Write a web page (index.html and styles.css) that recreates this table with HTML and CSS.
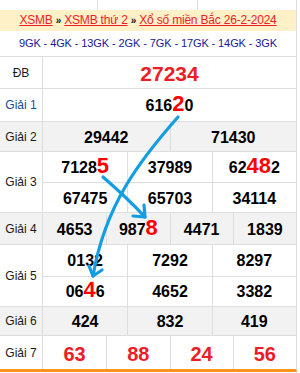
FILE: index.html
```html
<!DOCTYPE html>
<html>
<head>
<meta charset="utf-8">
<link rel="stylesheet" href="styles.css">
</head>
<body>
<div class="page">
  <div class="remnant"><div></div><div></div><div></div></div>
  <div class="board">
    <div class="crumb"><a>XSMB</a> <span class="sep">»</span> <a>XSMB thứ 2</a> <span class="sep">»</span> <a>Xổ số miền Bắc 26-2-2024</a></div>
    <div class="codes">9GK - 4GK - 13GK - 2GK - 7GK - 17GK - 14GK - 3GK</div>

    <div class="row h32">
      <div class="lbl">ĐB</div>
      <div class="cells c1"><div><span class="num db">27234</span></div></div>
    </div>
    <div class="row h33">
      <div class="lbl blue">Giải 1</div>
      <div class="cells c1"><div><span class="num">616<b class="hi">2</b>0</span></div></div>
    </div>
    <div class="row gray h30">
      <div class="lbl">Giải 2</div>
      <div class="cells c2"><div><span class="num">29442</span></div><div><span class="num">71430</span></div></div>
    </div>
    <div class="row h61">
      <div class="lbl">Giải 3</div>
      <div class="cells c3 two">
        <div><span class="num">7128<b class="hi">5</b></span></div><div><span class="num">37989</span></div><div><span class="num">62<b class="hi">48</b>2</span></div>
        <div><span class="num">67475</span></div><div><span class="num">65703</span></div><div><span class="num">34114</span></div>
      </div>
    </div>
    <div class="row gray h32">
      <div class="lbl">Giải 4</div>
      <div class="cells c4"><div><span class="num">4653</span></div><div><span class="num">987<b class="hi">8</b></span></div><div><span class="num">4471</span></div><div><span class="num">1839</span></div></div>
    </div>
    <div class="row h62">
      <div class="lbl">Giải 5</div>
      <div class="cells c3 two">
        <div><span class="num">0132</span></div><div><span class="num">7292</span></div><div><span class="num">8297</span></div>
        <div><span class="num">06<b class="hi">4</b>6</span></div><div><span class="num">4652</span></div><div><span class="num">3382</span></div>
      </div>
    </div>
    <div class="row gray h29">
      <div class="lbl">Giải 6</div>
      <div class="cells c3"><div><span class="num">424</span></div><div><span class="num">832</span></div><div><span class="num">419</span></div></div>
    </div>
    <div class="row h34 last">
      <div class="lbl">Giải 7</div>
      <div class="cells c4"><div><span class="num red">63</span></div><div><span class="num red">88</span></div><div><span class="num red">24</span></div><div><span class="num red">56</span></div></div>
    </div>
  </div>
  <svg class="arrows" width="300" height="373" viewBox="0 0 300 373">
    <g fill="none" stroke="#139de3" stroke-width="3.2" stroke-linecap="round" stroke-linejoin="round">
      <path d="M178 117 C140 160 105 205 93 276"/>
      <path d="M89 266 L93 276 L102 270"/>
      <path d="M103 177 C118 190 132 203 145 217"/>
      <path d="M144 205 L145 217 L133 216"/>
    </g>
  </svg>
</div>
</body>
</html>
```
FILE: styles.css
```css
* { box-sizing: border-box; }
html, body { margin: 0; padding: 0; background: #fff; }
body { font-family: "Liberation Sans", Arial, sans-serif; }
.page { position: relative; width: 300px; height: 373px; overflow: hidden; }

.remnant { display: grid; grid-template-columns: 98px 100px 99px; height: 10px; width: 297px; }
.remnant div { border-right: 1px solid #dedede; }

.board { width: 297px; border-right: 1px solid #dedede; border-bottom: 3px solid #f7931e; }

.crumb {
  height: 21px; background: #fef0c7; text-align: center;
  font-size: 12px; letter-spacing: -0.2px; line-height: 21px; color: #111;
}
.crumb a { color: #ee1c25; text-decoration: underline; }
.crumb .sep { font-size: 10px; font-weight: bold; }

.codes {
  height: 26px; line-height: 25px; text-align: center; font-size: 11px; letter-spacing: -0.1px;
  color: #17179a; border-bottom: 1px solid #dedede;
}

.row { display: grid; grid-template-columns: 43px 1fr; border-bottom: 1px solid #dedede; }
.row.last { border-bottom: none; }
.h29 { height: 29px; } .h30 { height: 30px; } .h32 { height: 32px; } .h33 { height: 33px; }
.h34 { height: 33px; } .h61 { height: 61px; } .h62 { height: 62px; }
.gray { background: #f2f2f2; }

.lbl {
  border-right: 1px solid #dedede; display: flex; align-items: center; justify-content: center;
  font-size: 12px; color: #1a1a1a;
}
.lbl.blue { color: #0f4f98; }

.cells { display: grid; }
.c1 { grid-template-columns: 1fr; }
.c2 { grid-template-columns: 1fr 1fr; }
.c3 { grid-template-columns: 1fr 1fr 1fr; }
.c4 { grid-template-columns: 1fr 1fr 1fr 1fr; }
.two { grid-template-rows: 1fr 1fr; }
.cells > div { display: flex; align-items: center; justify-content: center; }
.c2 > div + div, .c4 > div + div { border-left: 1px solid #dedede; }
.c3 > div:nth-child(3n+2), .c3 > div:nth-child(3n) { border-left: 1px solid #dedede; }
.two > div:nth-child(n+4) { border-top: 1px solid #dedede; }

.num { font-size: 16px; font-weight: bold; color: #000; line-height: 16px; padding-top: 2px; }
.num .hi { color: #ff0000; font-size: 22px; font-weight: bold; line-height: 0; }
.num.db { color: #ee1c25; font-size: 21px; line-height: 21px; }
.num.red { color: #ee1c25; font-size: 20px; line-height: 20px; }

.arrows { position: absolute; left: 0; top: 0; pointer-events: none; }
```
